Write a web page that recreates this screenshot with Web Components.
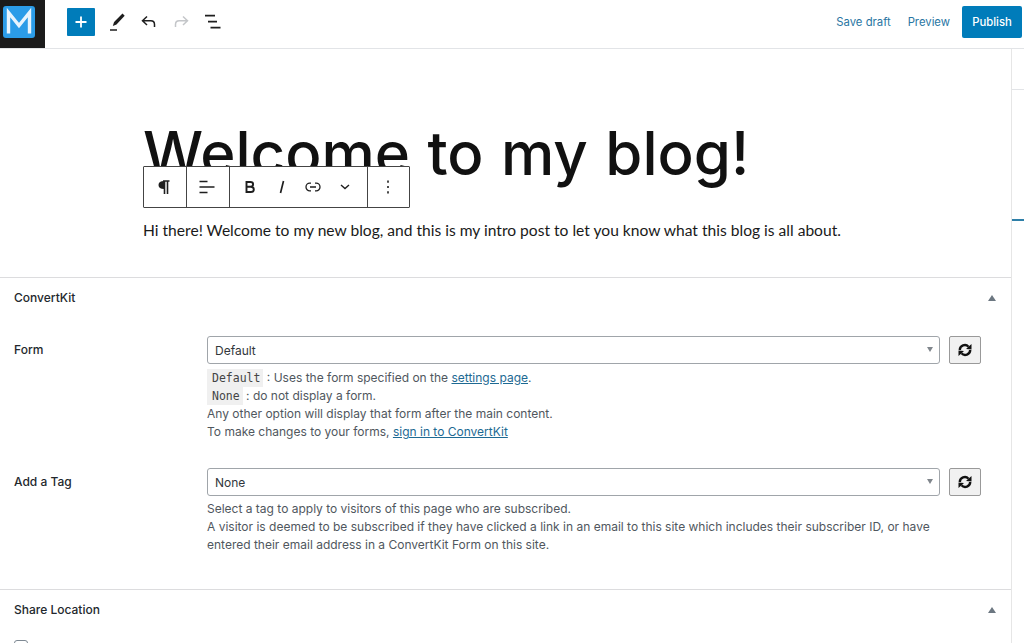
<!DOCTYPE html>
<html lang="en">
<head>
<meta charset="utf-8">
<title>Editor</title>
<style>
  html, body { margin: 0; height: 643px; overflow: hidden; background: #fff; }
  body { font-family: Inter, "Liberation Sans", sans-serif; color: #1e1e1e; }
</style>
</head>
<body>
<edit-page>
  <edit-topbar slot="top"></edit-topbar>
  <edit-canvas slot="main">
    <span slot="title">Welcome to my blog!</span>
    <span slot="intro">Hi there! Welcome to my new blog, and this is my intro post to let you know what this blog is all about.</span>
  </edit-canvas>
  <meta-box slot="main" heading="ConvertKit" style="--pad-bottom:35px;--head-gap:19px">
    <form-row label="Form" value="Default" style="--row-gap:27px;--ctl-gap:5px;--label-top:5px">
      <div><code-tag>Default</code-tag> : Uses the form specified on the <a href="#">settings page</a>.</div>
      <div><code-tag>None</code-tag> : do not display a form.</div>
      <div>Any other option will display that form after the main content.</div>
      <div>To make changes to your forms, <a href="#">sign in to ConvertKit</a></div>
    </form-row>
    <form-row label="Add a Tag" value="None" style="--label-top:5px">
      <div>Select a tag to apply to visitors of this page who are subscribed.</div>
      <div>A visitor is deemed to be subscribed if they have clicked a link in an email to this site which includes their subscriber ID, or have</div>
      <div>entered their email address in a ConvertKit Form on this site.</div>
    </form-row>
  </meta-box>
  <meta-box slot="main" heading="Share Location" style="--pad-bottom:0px;--head-gap:11px">
    <span class="check"></span>
  </meta-box>
</edit-page>

<script>
function defineBox(name, html) {
  customElements.define(name, class extends HTMLElement {
    constructor() {
      super();
      const root = this.attachShadow({ mode: 'open' });
      root.innerHTML = typeof html === 'function' ? html(this) : html;
    }
  });
}

defineBox('edit-page', `
  <style>
    :host { display: grid; grid-template-rows: 49px 1fr; height: 643px; overflow: hidden; }
    .body { display: grid; grid-template-columns: 1012px 1fr; min-height: 0; }
    .main { border-right: 1px solid #e6e6e6; overflow: hidden; box-sizing: border-box; }
    .side { position: relative; }
    .side i { display: block; height: 40px; border-bottom: 1px solid #e2e4e7; }
    .side b { display: block; height: 2px; background: #2e7fa8; margin-top: 129px; }
  </style>
  <slot name="top"></slot>
  <div class="body">
    <div class="main"><slot name="main"></slot></div>
    <div class="side"><i></i><b></b></div>
  </div>`);

defineBox('edit-topbar', `
  <style>
    :host { display: flex; align-items: center; height: 49px; box-sizing: border-box; padding-bottom: 4px; border-bottom: 1px solid #e2e4e7; font-size: 11.300px; }
    .logo { width: 45px; height: 48px; background: #1b1b1b; align-self: flex-start; flex: none; margin-bottom: -4px; box-sizing: border-box; padding: 6px 0 0 3px; }
    .logo svg { display: block; }
    .tools { display: flex; align-items: center; margin-left: 22px; }
    .add { width: 28px; height: 28px; background: #007cba; border-radius: 1px; display: flex; align-items: center; justify-content: center; margin-right: 6px; }
    .tool { width: 32px; height: 32px; display: flex; align-items: center; justify-content: center; }
    .right { margin-left: auto; display: flex; align-items: center; padding-right: 2px; }
    a { color: #2a76a3; text-decoration: none; }
    .save { margin-right: 18px; position: relative; left: 1px; }
    .prev { margin-right: 12px; }
    .pub { width: 60px; height: 32px; background: #007cba; color: #fff; border-radius: 2px; display: flex; align-items: center; justify-content: center; font-weight: 500; }
  </style>
  <div class="logo">
    <svg width="32" height="32" viewBox="0 0 32 32"><rect width="32" height="32" rx="3" fill="#2b9ce8"/><path d="M5.500 27.500V6.500L16 19.500 26.500 6.500V27.500" fill="none" stroke="#e8f4fd" stroke-width="3.400"/></svg>
  </div>
  <div class="tools">
    <div class="add"><svg width="14" height="14" viewBox="0 0 14 14"><path d="M7 1.500v11M1.500 7h11" stroke="#fff" stroke-width="1.800"/></svg></div>
    <div class="tool"><svg width="20" height="24" viewBox="0 0 20 24"><path d="M15.500 3.500l2.200 2.200-8.200 8.700-3.700 1.500 1.300-3.800z" fill="#1e1e1e"/><path d="M3 20h7" stroke="#1e1e1e" stroke-width="1.500"/></svg></div>
    <div class="tool"><svg width="20" height="20" viewBox="0 0 20 20"><path d="M8 4.500L3.500 8.800 8 13M3.800 8.800h8c2.500 0 3.700 1.600 3.700 3.700V15" fill="none" stroke="#1e1e1e" stroke-width="1.500"/></svg></div>
    <div class="tool"><svg width="20" height="20" viewBox="0 0 20 20"><path d="M12 4.500l4.500 4.300L12 13M16.200 8.800h-8c-2.500 0-3.700 1.600-3.700 3.700V15" fill="none" stroke="#c4c6c9" stroke-width="1.500"/></svg></div>
    <div class="tool"><svg width="20" height="20" viewBox="0 0 20 20"><path d="M2 3.700h10M5 9.700h9M7.500 15.700h10" stroke="#1e1e1e" stroke-width="1.700"/></svg></div>
  </div>
  <div class="right">
    <a class="save" href="#">Save draft</a>
    <a class="prev" href="#">Preview</a>
    <div class="pub">Publish</div>
  </div>`);

defineBox('edit-canvas', `
  <style>
    :host { display: block; height: 229px; box-sizing: border-box; position: relative; padding: 72px 0 0 143px; border-bottom: 1px solid #dcdcde; }
    .title { font-family: Inter, sans-serif; font-size: 60px; line-height: 64px; font-weight: 500; letter-spacing: 0; word-spacing: 1.500px; color: #111; white-space: nowrap; }
    .intro { font-family: Lato, sans-serif; font-size: 15.600px; line-height: 24px; color: #1a1a1a; margin-top: 33px; white-space: nowrap; }
    .bar { position: absolute; left: 143px; top: 117px; height: 42px; box-sizing: border-box; display: flex; background: #fff; border: 1px solid #444; border-radius: 1px; }
    .grp { display: flex; align-items: center; justify-content: center; border-left: 1px solid #444; box-sizing: border-box; height: 40px; }
    .grp:first-child { border-left: 0; }
    .ic { width: 31.700px; display: flex; align-items: center; justify-content: center; }
  </style>
  <div class="title"><slot name="title"></slot></div>
  <div class="intro"><slot name="intro"></slot></div>
  <div class="bar">
    <div class="grp" style="width:42px;padding-right:3px"><svg width="14" height="16" viewBox="0 0 14 16"><path d="M6 2H12.500M10.500 2v13M7.500 2v13" stroke="#1e1e1e" stroke-width="1.600" fill="none"/><path d="M7 2C3.500 2 1.500 3.500 1.500 6S3.500 10 7 10z" fill="#1e1e1e"/></svg></div>
    <div class="grp" style="width:43px;padding-right:2px"><svg width="16" height="14" viewBox="0 0 16 14"><path d="M0.500 1.500h8M0.500 7h15M0.500 12.500h8" stroke="#1e1e1e" stroke-width="1.500"/></svg></div>
    <div class="grp" style="width:138px;justify-content:flex-start;padding-left:4px">
      <div class="ic"><svg width="12" height="14" viewBox="0 0 12 14"><path d="M2.500 2h3.800c1.800 0 2.800.9 2.800 2.300S8.100 6.800 6.300 6.800H2.500zM2.500 6.800h4.300c1.900 0 3 .9 3 2.600s-1.100 2.600-3 2.600H2.500z" fill="none" stroke="#1e1e1e" stroke-width="1.900"/></svg></div>
      <div class="ic"><svg width="8" height="14" viewBox="0 0 8 14"><path d="M5.500 1L2.500 13" stroke="#1e1e1e" stroke-width="1.700"/></svg></div>
      <div class="ic"><svg width="16" height="10" viewBox="0 0 16 10"><path d="M6 1.200H4.800a3.800 3.800 0 0 0 0 7.600H6M10 1.200h1.200a3.800 3.800 0 0 1 0 7.600H10M5 5h6" fill="none" stroke="#1e1e1e" stroke-width="1.300"/></svg></div>
      <div class="ic"><svg width="10" height="6" viewBox="0 0 10 6"><path d="M1 1l4 3.500L9 1" fill="none" stroke="#1e1e1e" stroke-width="1.400"/></svg></div>
    </div>
    <div class="grp" style="width:42px;padding-right:2px"><svg width="4" height="14" viewBox="0 0 4 14"><path d="M2 0.500v2.200M2 5.900v2.200M2 11.300v2.200" stroke="#1e1e1e" stroke-width="1.600"/></svg></div>
  </div>`);

defineBox('meta-box', el => `
  <style>
    :host { display: block; border-bottom: 1px solid #dcdcde; font-size: 12px; padding-bottom: var(--pad-bottom, 0px); }
    .head { height: 39px; display: flex; align-items: center; justify-content: space-between; padding: 0 15px 0 14px; margin-bottom: var(--head-gap, 19px); font-weight: 500; font-size: 12px; color: #23282d; }
    .tri { width: 0; height: 0; border: 4px solid transparent; border-top: 0; border-bottom: 6px solid #6c7781; }
    .content { padding: 0 14px; }
  </style>
  <div class="head"><span>${el.getAttribute('heading')}</span><span class="tri"></span></div>
  <div class="content"><slot></slot></div>`);

defineBox('form-row', el => `
  <style>
    :host { display: grid; grid-template-columns: 193px 1fr; margin-bottom: var(--row-gap, 0px); font-size: 12px; line-height: 18px; color: #50575e; }
    .label { font-weight: 500; color: #23282d; padding-top: var(--label-top, 4px); }
    .ctl { display: flex; gap: 9px; margin-bottom: var(--ctl-gap, 4px); }
    .sel { width: 733px; height: 28px; box-sizing: border-box; border: 1px solid #a0a5aa; border-radius: 3px; display: flex; align-items: center; justify-content: space-between; padding: 2px 6px 0 7px; color: #32373c; font-size: 12px; }
    .sel i { width: 0; height: 0; border: 3.500px solid transparent; border-bottom: 0; border-top: 5px solid #80868c; margin-top: -3px; }
    .btn { width: 32px; height: 28px; box-sizing: border-box; background: #f1f1f1; border: 1px solid #999; border-radius: 2px; display: flex; align-items: center; justify-content: center; }
    ::slotted(div) { white-space: nowrap; }
  </style>
  <div class="label">${el.getAttribute('label')}</div>
  <div>
    <div class="ctl">
      <div class="sel"><span>${el.getAttribute('value')}</span><i></i></div>
      <div class="btn"><svg width="16" height="14" viewBox="0 0 16 14"><path d="M2.800 7a5 5 0 0 1 8.700-3.300M13.200 7a5 5 0 0 1-8.700 3.300" fill="none" stroke="#111" stroke-width="2.400"/><path d="M9 6L14.500 6.500V1zM7 8L1.500 7.500V13z" fill="#111"/></svg></div>
    </div>
    <slot></slot>
  </div>`);

defineBox('code-tag', `
  <style>
    :host { display: inline-block; font-family: "DejaVu Sans Mono", monospace; font-size: 11.500px; line-height: 18px; background: #f0f0f0; padding: 0 3px 0 5px; color: #444; }
  </style>
  <slot></slot>`);
</script>
<style>
  meta-box a { color: #1e6a93; }
  .check { display: block; width: 12px; height: 12px; border: 1px solid #7e8993; border-radius: 3px; }
</style>
</body>
</html>
